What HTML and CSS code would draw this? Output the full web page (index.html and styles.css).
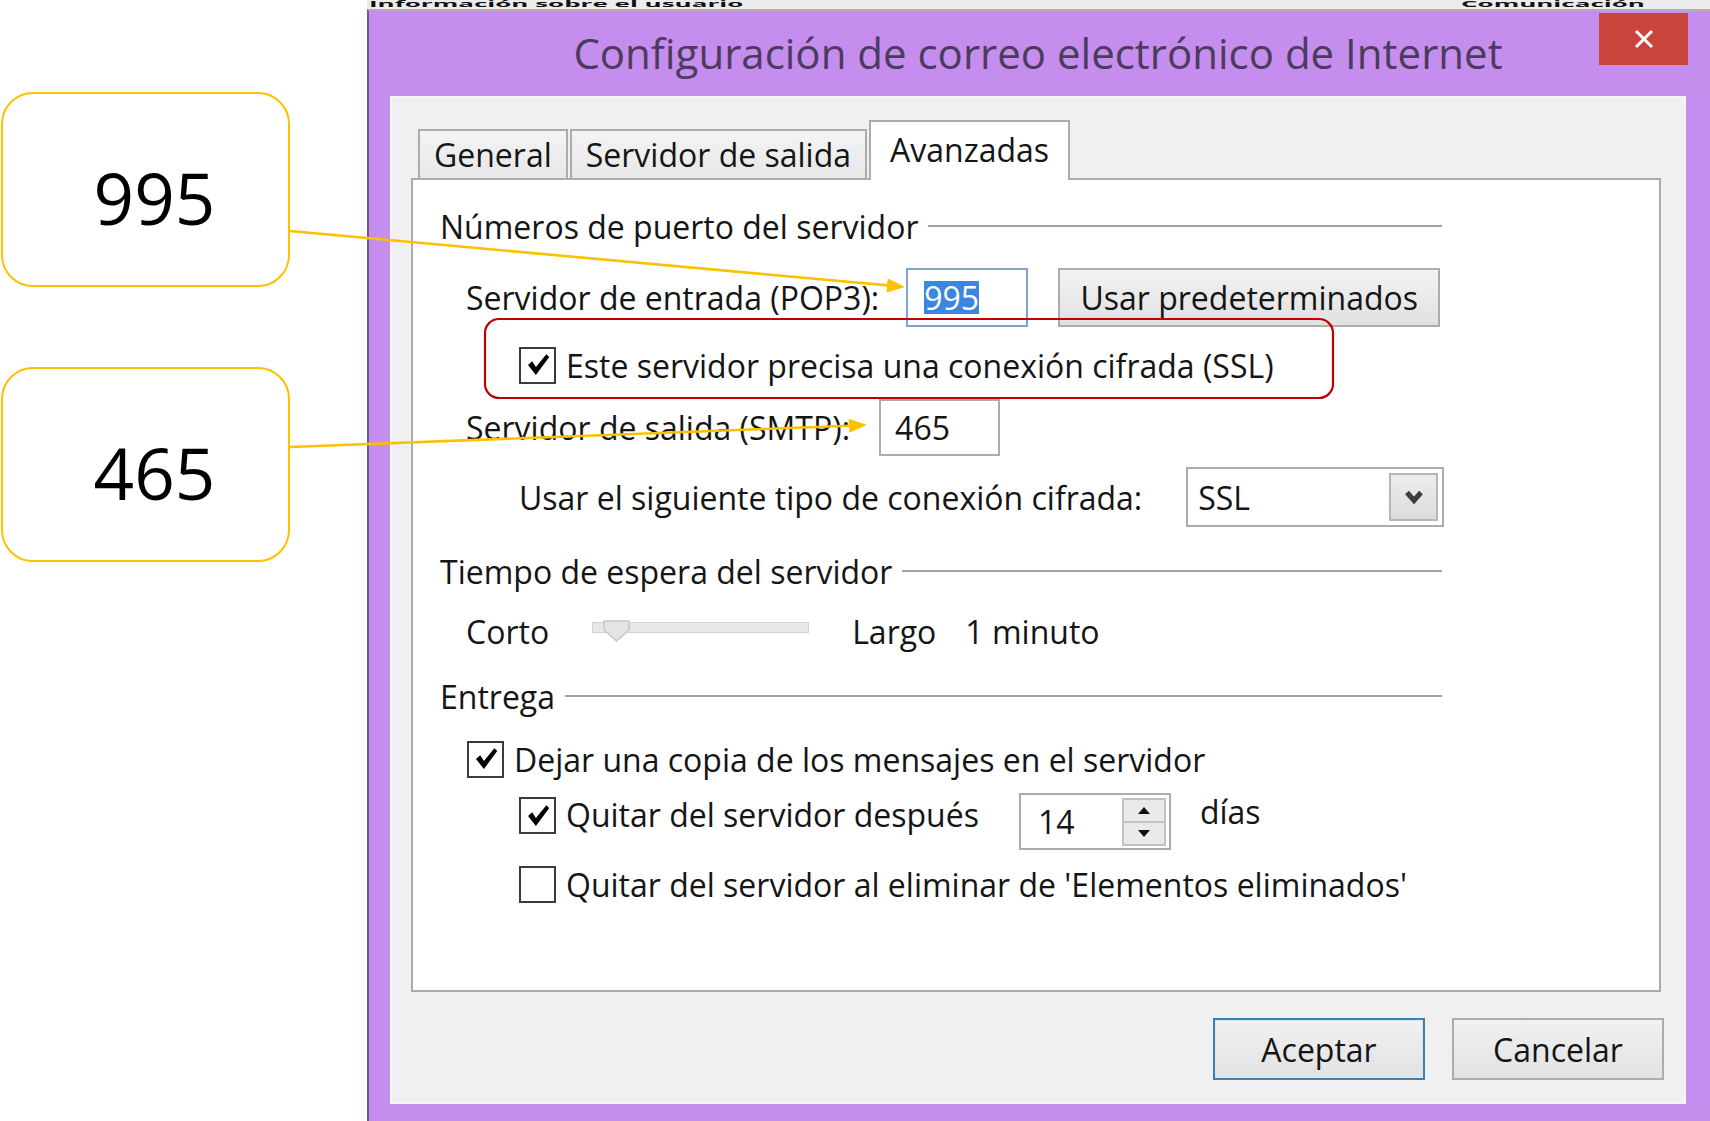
FILE: index.html
```html
<!DOCTYPE html>
<html lang="es">
<head>
<meta charset="utf-8">
<title>Configuración de correo electrónico de Internet</title>
<link rel="stylesheet" href="styles.css">
</head>
<body>
<div class="page">
  <div class="callouts">
    <div class="callout">995</div>
    <div class="callout">465</div>
  </div>
  <div class="side">
    <div class="behind">
      <span class="behind-left">Información sobre el usuario</span>
      <span class="behind-right">Comunicación</span>
    </div>
    <div class="dialog">
      <div class="titlebar">
        <div class="title">Configuración de correo electrónico de Internet</div>
        <div class="close">
          <svg width="22" height="22" viewBox="0 0 22 22"><path d="M3 3 L19 19 M19 3 L3 19" stroke="#fff" stroke-width="3" fill="none"/></svg>
        </div>
      </div>
      <div class="client">
        <div class="tabs">
          <div class="tab">General</div>
          <div class="tab">Servidor de salida</div>
          <div class="tab active">Avanzadas</div>
        </div>
        <div class="panel">
          <div class="row group ports-head">Números de puerto del servidor</div>
          <div class="row pop3-row">
            <span>Servidor de entrada (POP3):</span>
            <div class="field pop3-field"><span class="sel">995</span></div>
            <div class="button">Usar predeterminados</div>
          </div>
          <div class="row ssl-row">
            <span class="check"><svg width="30" height="30" viewBox="0 0 36 36"><path d="M6 18 L11 13.5 L15.5 20.5 L28 5 L31.5 8.5 L15.5 30 Z" fill="#000"/></svg></span>
            <span>Este servidor precisa una conexión cifrada (SSL)</span>
          </div>
          <div class="row smtp-row">
            <span>Servidor de salida (SMTP):</span>
            <div class="field smtp-field">465</div>
          </div>
          <div class="row enc-row">
            <span>Usar el siguiente tipo de conexión cifrada:</span>
            <div class="field combo">
              <span>SSL</span>
              <span class="combo-btn"><svg width="20" height="14" viewBox="0 0 20 14"><path d="M3 2.5 L10 10.5 L17 2.5" stroke="#3c3c3c" stroke-width="5" fill="none"/></svg></span>
            </div>
          </div>
          <div class="row group timeout-head">Tiempo de espera del servidor</div>
          <div class="row slider-row">
            <span>Corto</span>
            <div class="slider">
              <div class="slider-track"></div>
              <svg class="slider-thumb" width="27" height="22" viewBox="0 0 27 22"><path d="M1 1 H26 V10 L13.5 21 L1 10 Z" fill="#e4e4e4" stroke="#c6c6c6" stroke-width="1.5"/></svg>
            </div>
            <span>Largo</span>
            <span class="minute">1 minuto</span>
          </div>
          <div class="row group delivery-head">Entrega</div>
          <div class="row copy-row">
            <span class="check"><svg width="30" height="30" viewBox="0 0 36 36"><path d="M6 18 L11 13.5 L15.5 20.5 L28 5 L31.5 8.5 L15.5 30 Z" fill="#000"/></svg></span>
            <span>Dejar una copia de los mensajes en el servidor</span>
          </div>
          <div class="row remove-row">
            <span class="check"><svg width="30" height="30" viewBox="0 0 36 36"><path d="M6 18 L11 13.5 L15.5 20.5 L28 5 L31.5 8.5 L15.5 30 Z" fill="#000"/></svg></span>
            <span class="remove-label">Quitar del servidor después</span>
            <div class="field spin">
              <span>14</span>
              <span class="spin-btns">
                <span class="spin-half"><svg width="12" height="7" viewBox="0 0 12 7"><path d="M0 7 L6 0 L12 7 Z" fill="#111"/></svg></span>
                <span class="spin-half"><svg width="12" height="7" viewBox="0 0 12 7"><path d="M0 0 L6 7 L12 0 Z" fill="#111"/></svg></span>
              </span>
            </div>
            <span class="days">días</span>
          </div>
          <div class="row deleted-row">
            <span class="check"></span>
            <span>Quitar del servidor al eliminar de 'Elementos eliminados'</span>
          </div>
        </div>
        <div class="actions">
          <div class="btn default">Aceptar</div>
          <div class="btn">Cancelar</div>
        </div>
      </div>
    </div>
  </div>
  <svg class="overlay" width="1710" height="1121" viewBox="0 0 1710 1121">
    <rect x="485" y="319" width="848" height="79" rx="14" ry="14" fill="none" stroke="#c00000" stroke-width="2.2"/>
    <line x1="290" y1="231" x2="888" y2="285.4" stroke="#ffc000" stroke-width="2.6"/>
    <polygon points="905,287 886.5,292.4 887.7,278.4" fill="#ffc000"/>
    <line x1="290" y1="447" x2="850" y2="425.7" stroke="#ffc000" stroke-width="2.6"/>
    <polygon points="867,425 849.3,432.7 848.7,418.7" fill="#ffc000"/>
  </svg>
</div>
</body>
</html>
```
FILE: styles.css
```css
* { box-sizing: border-box; }
html, body { margin: 0; padding: 0; }
body {
  width: 1710px;
  height: 1121px;
  overflow: hidden;
  background: #ffffff;
  font-family: "Open Sans", "Noto Sans", "DejaVu Sans", sans-serif;
  color: #151515;
}
.page {
  position: relative;
  display: flex;
  width: 1710px;
  height: 1121px;
}
.callouts {
  flex: none;
  width: 367px;
  display: flex;
  flex-direction: column;
  gap: 80px;
  padding: 92px 0 0 1px;
}
.callout {
  width: 289px;
  height: 195px;
  border: 2px solid #ffc000;
  border-radius: 32px;
  display: flex;
  align-items: center;
  justify-content: center;
  padding: 16px 0 0 18px;
  font-size: 71px;
  color: #000;
}
.side {
  flex: 1;
  min-width: 0;
  display: flex;
  flex-direction: column;
}
.behind {
  flex: none;
  height: 9px;
  display: flex;
  align-items: flex-start;
  padding-left: 2px;
  background: #ececec;
}
.behind span {
  font-size: 26px;
  line-height: 26px;
  font-weight: 700;
  color: #111;
  white-space: nowrap;
  transform: scaleY(0.32);
  transform-origin: 0 0;
}
.behind-left { width: 1092px; flex: none; }
.dialog {
  flex: 1;
  background: #c58ded;
  border-left: 2px solid #6f5a80;
  border-top: 2px solid #b9a6c6;
  padding: 0 24px 0 21px;
  display: flex;
  flex-direction: column;
}
.titlebar {
  flex: none;
  height: 85px;
  padding-bottom: 3px;
  display: grid;
  grid-template-columns: 1fr auto 1fr;
  align-items: center;
}
.title {
  grid-column: 2;
  font-size: 42px;
  color: #4b3c5e;
  white-space: nowrap;
}
.close {
  grid-column: 3;
  justify-self: end;
  align-self: start;
  margin: 2px -2px 0 0;
  width: 89px;
  height: 52px;
  background: #c9443b;
  display: flex;
  align-items: center;
  justify-content: center;
}
.client {
  flex: none;
  height: 1008px;
  background: #f0f0f0;
  border: 2px solid #f8f3fa;
  padding: 22px 23px 0 19px;
  display: flex;
  flex-direction: column;
}
.tabs {
  flex: none;
  display: flex;
  align-items: flex-end;
  height: 58px;
  margin-left: 7px;
}
.tab {
  height: 49px;
  border: 2px solid #acacac;
  border-bottom: none;
  background: linear-gradient(#f4f4f4, #e7e7e7);
  padding: 0 14px;
  display: flex;
  align-items: center;
  font-size: 32px;
  white-space: nowrap;
}
.tab + .tab { margin-left: 2px; }
.tab.active {
  height: 60px;
  margin-bottom: -2px;
  background: #fff;
  padding: 0 19px 4px;
  position: relative;
  z-index: 1;
}
.panel {
  flex: none;
  height: 814px;
  border: 2px solid #acacac;
  background: #fff;
  padding-left: 27px;
  display: flex;
  flex-direction: column;
  font-size: 32px;
}
.row {
  flex: none;
  display: flex;
  align-items: center;
  white-space: nowrap;
}
.group {
  height: 40px;
  width: 1002px;
}
.group::after {
  content: "";
  flex: 1;
  height: 2px;
  background: #a3a3a3;
  margin-left: 10px;
}
.ports-head { margin-top: 26px; }
.pop3-row { margin-top: 22px; height: 59px; padding-left: 26px; }
.ssl-row { margin-top: 10px; height: 56px; padding-left: 79px; }
.smtp-row { margin-top: 6px; height: 57px; padding-left: 26px; }
.enc-row { margin-top: 11px; height: 60px; padding-left: 79px; }
.timeout-head { margin-top: 24px; }
.slider-row { margin-top: 20px; height: 40px; padding-left: 26px; }
.delivery-head { margin-top: 25px; }
.copy-row { margin-top: 23px; height: 40px; padding-left: 27px; }
.remove-row { margin-top: 14px; height: 57px; padding-left: 79px; align-items: flex-start; }
.deleted-row { margin-top: 14px; height: 40px; padding-left: 79px; }

.field {
  height: 100%;
  border: 2px solid #acacac;
  background: #fff;
  display: flex;
  align-items: center;
}
.pop3-field {
  width: 122px;
  margin-left: 27px;
  padding-left: 16px;
  border-color: #7fa2d2;
}
.sel {
  height: 33px;
  line-height: 33px;
  background: #3a86e0;
  color: #fff;
}
.button {
  height: 100%;
  width: 382px;
  margin-left: 30px;
  border: 2px solid #acacac;
  background: linear-gradient(#f2f2f2, #e1e1e1);
  display: flex;
  align-items: center;
  justify-content: center;
}
.check {
  flex: none;
  width: 37px;
  height: 37px;
  border: 2px solid #3b3b3b;
  background: #fff;
  margin-right: 10px;
  display: flex;
  align-items: center;
  justify-content: center;
}
.smtp-field {
  width: 121px;
  margin-left: 29px;
  padding-left: 14px;
}
.combo {
  width: 258px;
  margin-left: 44px;
  padding: 0 4px 0 10px;
  justify-content: space-between;
}
.combo-btn {
  width: 49px;
  height: 48px;
  background: linear-gradient(#ececec, #dcdcdc);
  border: 2px solid #b6b6b6;
  display: flex;
  align-items: center;
  justify-content: center;
}
.slider {
  position: relative;
  width: 217px;
  height: 22px;
  margin: 0 43px;
}
.slider-track {
  margin-top: 2px;
  height: 11px;
  background: #e7e7e7;
  border: 1px solid #d3d3d3;
}
.slider-thumb {
  position: absolute;
  left: 11px;
  top: 0;
}
.minute { margin-left: 29px; }
.remove-row .check { margin-top: 4px; }
.spin {
  width: 152px;
  margin-left: 40px;
  padding: 0 3px 0 17px;
}
.spin-btns {
  margin-left: auto;
  width: 44px;
  height: 48px;
  display: flex;
  flex-direction: column;
  border: 2px solid #c2c2c2;
  background: #eaeaea;
}
.spin-half {
  flex: 1;
  display: flex;
  align-items: center;
  justify-content: center;
}
.spin-half + .spin-half { border-top: 2px solid #c2c2c2; }
.days { margin: -3px 0 0 29px; }
.actions {
  flex: none;
  display: flex;
  justify-content: flex-end;
  gap: 27px;
  margin: 26px -3px 0 0;
}
.btn {
  width: 212px;
  height: 62px;
  border: 2px solid #acacac;
  background: linear-gradient(#f1f1f1, #e2e2e2);
  display: flex;
  align-items: center;
  justify-content: center;
  font-size: 32px;
}
.btn.default {
  border-color: #3c7fb3;
  box-shadow: inset 0 0 0 1px #d3e8f8;
}
.overlay {
  position: absolute;
  left: 0;
  top: 0;
  pointer-events: none;
}
```
